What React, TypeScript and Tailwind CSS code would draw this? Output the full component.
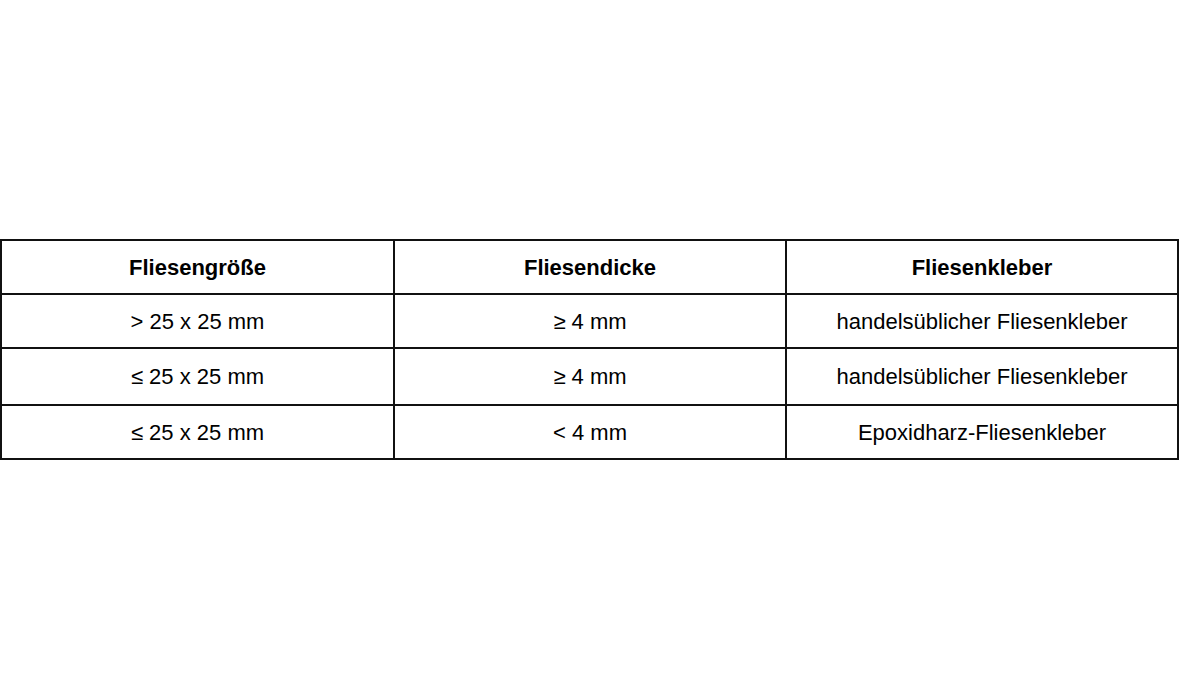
const rows = [
  ["> 25 x 25 mm", "≥ 4 mm", "handelsüblicher Fliesenkleber"],
  ["≤ 25 x 25 mm", "≥ 4 mm", "handelsüblicher Fliesenkleber"],
  ["≤ 25 x 25 mm", "< 4 mm", "Epoxidharz-Fliesenkleber"],
];

// border-box: heights include the 2px top border of each row
const heights = ["h-[54px]", "h-[57px]", "h-[54px]"];

export default function App() {
  return (
    <div
      className="min-h-[700px] w-[1180px] bg-white pt-[239px] text-[22px] text-black"
      style={{ fontFamily: '"Liberation Sans", Arial, sans-serif' }}
    >
      <div className="w-[1179px] border-2 border-[#111]">
        <div className="grid h-[52px] grid-cols-[391px_392px_1fr] font-bold">
          <div className="flex items-center justify-center">Fliesengröße</div>
          <div className="flex items-center justify-center border-l-2 border-[#111]">Fliesendicke</div>
          <div className="flex items-center justify-center border-l-2 border-[#111]">Fliesenkleber</div>
        </div>
        {rows.map((row, i) => (
          <div key={i} className={`grid grid-cols-[391px_392px_1fr] border-t-2 border-[#111] ${heights[i]}`}>
            <div className="flex items-center justify-center">{row[0]}</div>
            <div className="flex items-center justify-center border-l-2 border-[#111]">{row[1]}</div>
            <div className="flex items-center justify-center border-l-2 border-[#111]">{row[2]}</div>
          </div>
        ))}
      </div>
    </div>
  );
}
